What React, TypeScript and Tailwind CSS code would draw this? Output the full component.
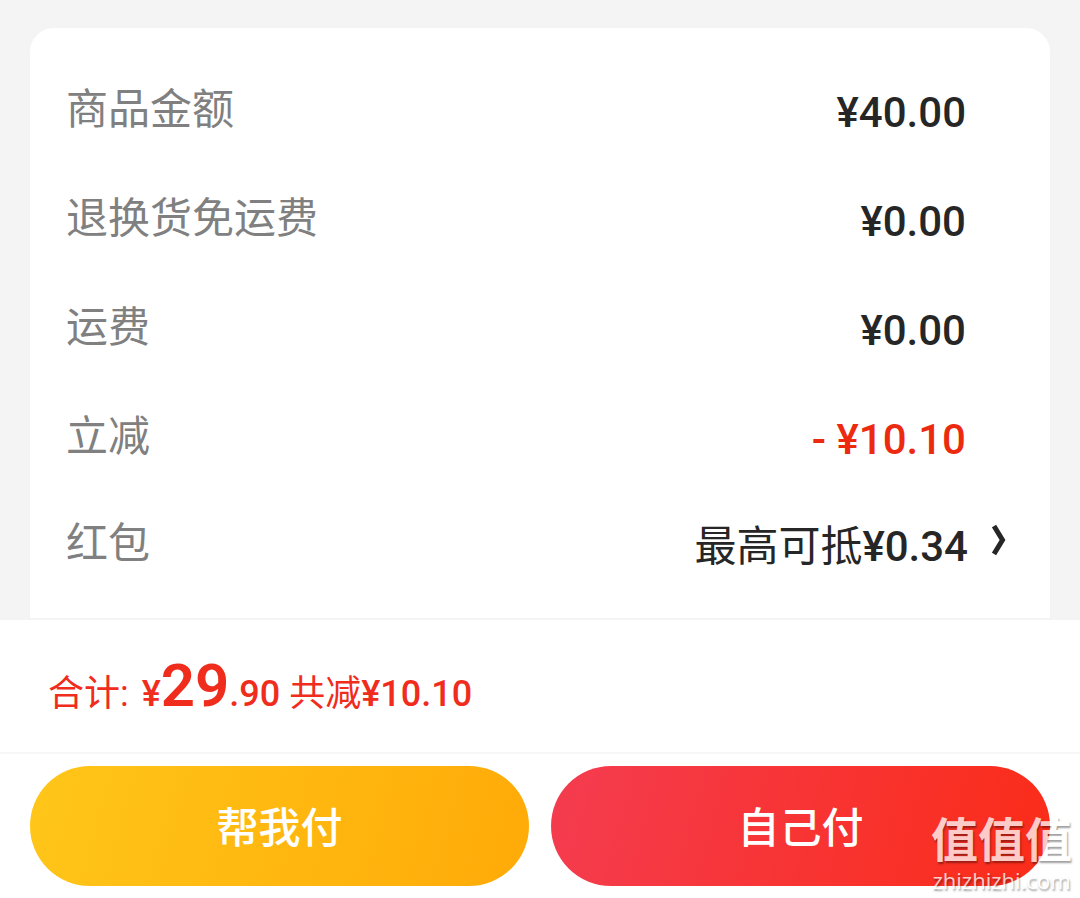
import React from 'react';

type Row = {
  label: string;
  value: string;
  discount?: boolean;
};

const rows: Row[] = [
  { label: '商品金额', value: '¥40.00' },
  { label: '退换货免运费', value: '¥0.00' },
  { label: '运费', value: '¥0.00' },
  { label: '立减', value: '- ¥10.10', discount: true },
];

const PriceRow = ({ label, value, discount }: Row) => (
  <div className="flex h-[109px] items-center justify-between">
    <dt className="pt-0.5 text-[#808080]">{label}</dt>
    <dd className={`pt-2 pr-12 font-medium ${discount ? 'text-[#ec2a10]' : 'text-[#262626]'}`}>
      {value}
    </dd>
  </div>
);

const App = () => {
  return (
    <div className="flex min-h-screen flex-col bg-[#f4f4f4] font-[Roboto,'Noto_Sans_CJK_SC',sans-serif]">
      {/* Price details */}
      <main className="flex flex-1 flex-col px-[30px] pt-7">
        <dl className="flex-1 rounded-t-3xl bg-white px-9 pt-[26px] text-[42px] leading-[60px]">
          {rows.map((row) => (
            <PriceRow key={row.label} {...row} />
          ))}
          <div className="flex h-[108px] items-center justify-between">
            <dt className="text-[#808080]">红包</dt>
            <dd className="text-[#262626]">
              <button type="button" className="flex items-center gap-6">
                <span className="pt-1.5">
                  最高可抵<span className="font-medium">¥0.34</span>
                </span>
                <svg className="mr-2 mb-2 h-8 w-[14px]" viewBox="0 0 14 32" fill="none" stroke="currentColor" strokeWidth={5}>
                  <path d="M2 2L10.500 16L2 30" />
                </svg>
              </button>
            </dd>
          </div>
        </dl>
      </main>

      {/* Checkout bar */}
      <footer className="relative border-t-2 border-[#f4f4f4] bg-white">
        <div className="flex h-[132px] items-center px-12 pt-2 text-[#f02c1c]">
          <p className="text-4xl leading-[60px]">
            合计: <span className="ml-1 font-medium">¥</span>
            <span className="text-[60px] leading-[60px] font-semibold">29</span>
            <span className="font-medium">.90</span> 共减
            <span className="font-medium">¥10.10</span>
          </p>
        </div>
        <div className="flex gap-[22px] border-t-2 border-[#f7f7f7] px-[30px] pt-3 pb-3 text-[42px] font-medium text-white">
          <button type="button" className="h-[120px] flex-1 rounded-full bg-[linear-gradient(105deg,#ffc619,#ffaa08)] pt-1">
            帮我付
          </button>
          <button type="button" className="h-[120px] flex-1 rounded-full bg-[linear-gradient(105deg,#f43c50,#fb2c18)] pt-1">
            自己付
          </button>
        </div>

        {/* Watermark */}
        <div className="pointer-events-none absolute right-2 bottom-1.5 flex flex-col items-center text-white opacity-75 [text-shadow:1px_2px_2px_rgb(0_0_0/0.5)]">
          <span className="text-[47px] leading-[54px] font-bold">值值值</span>
          <span className="font-['Open_Sans',sans-serif] text-[22px] leading-6 font-medium">zhizhizhi.com</span>
        </div>
      </footer>
    </div>
  );
};

export default App;
